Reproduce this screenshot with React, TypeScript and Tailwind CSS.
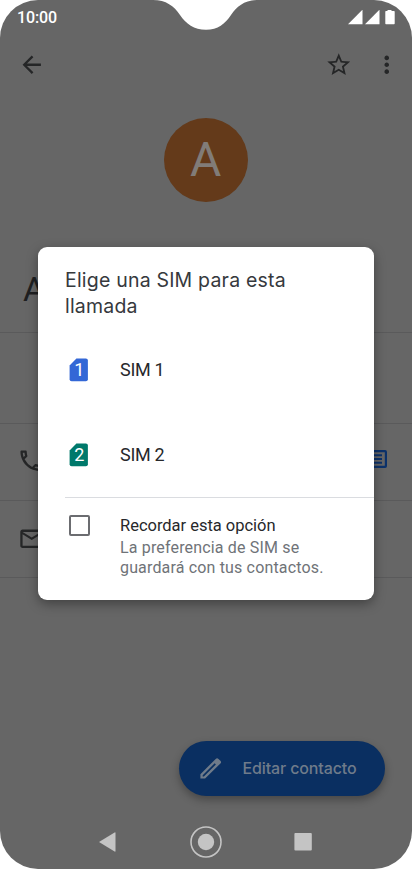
import React from 'react';
import { MdArrowBack, MdMoreVert, MdOutlineCall, MdOutlineEmail, MdStarBorder } from 'react-icons/md';

interface SimOptionProps {
  slot: number;
  label: string;
  color: string;
}

function StatusBar() {
  return (
    <div className="flex h-9 items-center justify-between pl-[17px] pr-[17px] text-white">
      <span className="text-[16px] font-medium leading-none tracking-[-0.1px]">10:00</span>
      <svg width="47" height="16" viewBox="0 0 47 16" fill="currentColor">
        <path d="M0 14.2L14.5 -0.3V14.2Z" />
        <path d="M17 14.2L31.5 -0.3V14.2Z" />
        <path d="M39.5 0h4v1.1H46a.7.7 0 0 1 .7.7v11.7a.7.7 0 0 1-.7.7h-8a.7.7 0 0 1-.7-.7V1.8a.7.7 0 0 1 .7-.7h1.5Z" />
      </svg>
    </div>
  );
}

function Notch() {
  return (
    <svg className="absolute left-[153px] top-0" width="106" height="30" viewBox="0 0 106 30" fill="#fff">
      <path d="M0 0C13 0 21 6 27 15C33 24 41 29.7 53 29.7C65 29.7 72 24 78 15C84 6 92 0 106 0Z" />
    </svg>
  );
}

function SimOption({ slot, label, color }: SimOptionProps) {
  return (
    <button className="flex h-[85px] w-full items-center text-left">
      <svg width="20" height="24" viewBox="0 0 20 24">
        <path d="M7.4 0.5H16.9a2 2 0 0 1 2 2V21.3a2 2 0 0 1-2 2H2.6a2 2 0 0 1-2-2V7.4Z" fill={color} />
        <text x="10.2" y="18.3" textAnchor="middle" fill="#fff" className="font-[Roboto,sans-serif] text-[18px]">
          {slot}
        </text>
      </svg>
      <span className="ml-[31px] text-[18px] tracking-[-0.3px] text-[#27282b]">{label}</span>
    </button>
  );
}

function SimDialog() {
  return (
    <div className="absolute left-[38px] top-[247px] flex h-[353px] w-[336px] flex-col rounded-[9px] bg-white pt-5 shadow-[0_4px_12px_rgba(0,0,0,0.36)]">
      <h2 className="pl-[27px] font-[Inter,sans-serif] text-[19.5px] leading-[26px] tracking-[0.2px] text-[#36393d]">
        Elige una SIM para esta
        <br />
        llamada
      </h2>
      <div className="mt-2 pl-[31px]">
        <SimOption slot={1} label="SIM 1" color="#3367d6" />
        <SimOption slot={2} label="SIM 2" color="#00796b" />
      </div>
      <div className="ml-[27px] border-t border-[#dadce0]" />
      <label className="flex pl-[31px] pt-[17px]">
        <span className="h-[21px] w-[21px] shrink-0 rounded-[2px] border-2 border-[#6b6c70]" />
        <span className="ml-[30px] flex flex-col">
          <span className="text-[16.5px] leading-[21px] tracking-[-0.02px] text-[#27282b]">Recordar esta opción</span>
          <span className="mt-[2px] text-[16px] leading-5 tracking-[0.16px] text-[#6f7378]">
            La preferencia de SIM se
            <br />
            guardará con tus contactos.
          </span>
        </span>
      </label>
    </div>
  );
}

function NavBar() {
  return (
    <div className="mt-auto flex h-[55px] items-center justify-center text-[#c4c4c4]">
      <svg width="214" height="34" viewBox="0 0 214 34" fill="currentColor">
        <path d="M0 17L15.6 7.5a.6.6 0 0 1 .9.5V26a.6.6 0 0 1-.9.5Z" />
        <circle cx="107" cy="17" r="15" fill="none" stroke="currentColor" strokeWidth="1.6" />
        <circle cx="107" cy="17" r="8.2" />
        <rect x="195.4" y="8" width="17.4" height="17.4" rx="1" />
      </svg>
    </div>
  );
}

export default function App() {
  return (
    <div className="h-[869px] w-[412px] overflow-hidden bg-white font-[Roboto,sans-serif]">
      <div className="relative flex h-full w-full flex-col overflow-hidden rounded-[38px] bg-[#666666]">
        <StatusBar />
        <div className="flex h-[58px] items-center pl-[18px] pr-3 text-[#252627]">
          <MdArrowBack size={27.5} />
          <MdStarBorder size={27.5} className="ml-auto" />
          <MdMoreVert size={27.5} className="ml-5" />
        </div>

        <div className="ml-[163.5px] mt-[23.5px] flex h-[84.5px] w-[84.5px] items-center justify-center rounded-full bg-[#643a1a] pt-px text-[48px] text-[#817c78]">
          A
        </div>
        <div className="flex h-[130.5px] items-end border-b border-[#5a5a5b] pb-[23px] pl-[23px] text-[34px] leading-[40px] text-[#1f2021]">
          A
        </div>
        <div className="h-[91px] border-b border-[#5a5a5b]" />
        <div className="flex h-[77px] items-center justify-between border-b border-[#5a5a5b] pl-[17px] pr-[25px] text-[#252627]">
          <MdOutlineCall size={27.5} className="mb-0.5" />
          <svg className="mb-[5px]" width="23" height="18" viewBox="0 0 23 18" fill="none" stroke="#0c326b">
            <rect x="1.1" y="1.1" width="20.8" height="15.8" rx="0.8" strokeWidth="2.2" />
            <path d="M4 5.2H18M4 9H18M4 12.8H18" strokeWidth="2" />
          </svg>
        </div>
        <div className="flex h-[77px] items-center border-b border-[#5a5a5b] pl-[18px] text-[#252627]">
          <MdOutlineEmail size={27.5} />
        </div>

        <button className="ml-[178.5px] mt-[163px] flex h-[55px] w-[206px] items-center rounded-full bg-[#0a2f61] pl-[21px] font-[Inter,sans-serif] text-[16px] font-medium tracking-[-0.13px] text-[#6f7b8a] shadow-[0_4px_9px_rgba(0,0,0,0.3)]">
          <svg width="22" height="22" viewBox="0 0 22 22" fill="currentColor">
            <path
              fillRule="evenodd"
              d="M0.4 17.2L15.7 1.9a2 2 0 0 1 2.8 0L20.4 3.8a2 2 0 0 1 0 2.8L5.1 21.6H0.4ZM2.7 18.2V19.4H3.9L15.9 7.5L14.7 6.3Z"
            />
          </svg>
          <span className="ml-[21px]">Editar contacto</span>
        </button>

        <NavBar />
        <Notch />
        <SimDialog />
      </div>
    </div>
  );
}
